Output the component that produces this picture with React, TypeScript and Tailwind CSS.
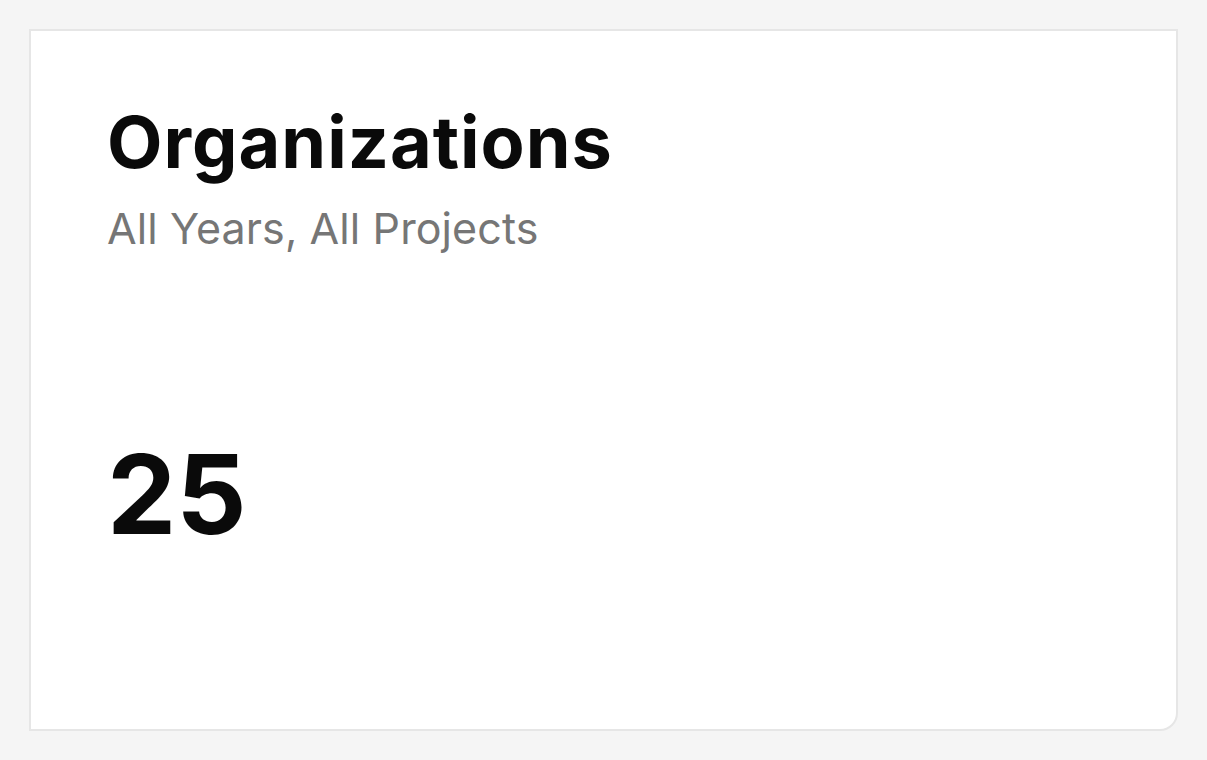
import React from 'react';

const StatCard: React.FC<{ title: string; subtitle: string; value: string }> = ({ title, subtitle, value }) => (
  <div className="flex h-[702px] w-[1149px] flex-col rounded-br-[18px] border-2 border-[#e6e6e6] bg-white pl-[76px] pt-[68px]">
    <h2 className="text-[72px] font-bold leading-[86px] tracking-[1px] text-[#0a0a0a]">{title}</h2>
    <p className="mt-[17px] text-[43px] leading-[52px] tracking-[0.1px] text-[#767676]">{subtitle}</p>
    <div className="mt-[175px] text-[110px] font-bold leading-[130px] text-[#0a0a0a]">{value}</div>
  </div>
);

export default function App() {
  return (
    <div className="min-h-[760px] bg-[#f5f5f5] pl-[29px] pt-[29px] font-['Inter',sans-serif]">
      <StatCard title="Organizations" subtitle="All Years, All Projects" value="25" />
    </div>
  );
}
